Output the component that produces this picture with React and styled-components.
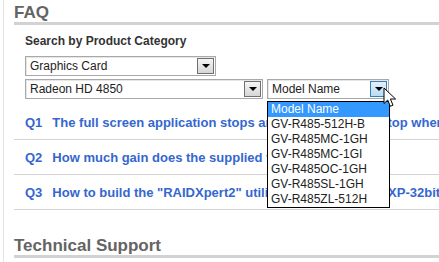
import styled, { createGlobalStyle } from 'styled-components';

const GlobalStyle = createGlobalStyle`
  body {
    margin: 0;
    background: #fff;
    font-family: "Liberation Sans", Arial, sans-serif;
  }
`;

const models = [
  'Model Name',
  'GV-R485-512H-B',
  'GV-R485MC-1GH',
  'GV-R485MC-1GI',
  'GV-R485OC-1GH',
  'GV-R485SL-1GH',
  'GV-R485ZL-512H',
];

const faqs = [
  { n: 'Q1', text: 'The full screen application stops and goes to the desktop when running games' },
  { n: 'Q2', text: 'How much gain does the supplied tool give?' },
  { n: 'Q3', text: 'How to build the "RAIDXpert2" utility for the Windows XP-32bit OS' },
];

function Select({ width, value, focused }) {
  return (
    <SelectBox $w={width}>
      <SelectValue>{value}</SelectValue>
      <ArrowButton $focused={focused}>
        <Triangle />
      </ArrowButton>
    </SelectBox>
  );
}

function App() {
  return (
    <Page>
      <GlobalStyle />
      <Heading>FAQ</Heading>
      <Search>
        <SearchLabel>Search by Product Category</SearchLabel>
        <SelectRow>
          <Select width={191} value="Graphics Card" />
        </SelectRow>
        <SelectRow>
          <Select width={238} value="Radeon HD 4850" />
          <Anchor>
            <Select width={122} value="Model Name" focused />
            <DropList>
              {models.map((m, i) => (
                <DropItem key={m} $active={i === 0}>{m}</DropItem>
              ))}
            </DropList>
            <Cursor width="14" height="21" viewBox="0 0 14 21">
              <path d="M1 1 L1 16.5 L4.7 13 L7.3 19.3 L10 18.2 L7.4 12 L12.6 12 Z" fill="#fff" stroke="#000" strokeWidth="1" strokeLinejoin="round" />
            </Cursor>
          </Anchor>
        </SelectRow>
      </Search>
      <FaqList>
        {faqs.map((f) => (
          <FaqRow key={f.n}>
            <QNum>{f.n}</QNum>
            <QText>{f.text}</QText>
          </FaqRow>
        ))}
      </FaqList>
      <Heading $top>Technical Support</Heading>
    </Page>
  );
}

const Page = styled.div`
  margin-left: 3px;
  border-left: 1px solid #e4e4e4;
  padding-left: 10px;
  height: 262px;
  box-sizing: border-box;
  overflow: hidden;
`;

const Heading = styled.h2`
  margin: ${(p) => (p.$top ? '26px' : '3px')} 0 0;
  padding: 0;
  font-size: 17px;
  line-height: 19px;
  font-weight: bold;
  color: #646464;
  border-bottom: 3px solid #d2d2d2;
`;

const Search = styled.div`
  padding: 9px 0 0 11px;
`;

const SearchLabel = styled.div`
  font-size: 12px;
  font-weight: bold;
  color: #333;
  line-height: 14px;
  margin-bottom: 8px;
`;

const SelectRow = styled.div`
  display: flex;
  gap: 4px;
  margin-bottom: 3px;
`;

const Anchor = styled.div`
  position: relative;
`;

const SelectBox = styled.div`
  width: ${(p) => p.$w}px;
  height: 20px;
  box-sizing: border-box;
  display: flex;
  align-items: center;
  border: 1px solid #a9a9a9;
  box-shadow: inset 1px 1px 0 #e6e6e6;
  background: #fff;
  padding: 0 1px 0 4px;
`;

const SelectValue = styled.span`
  flex: 1;
  font-size: 12px;
  color: #222;
  white-space: nowrap;
`;

const ArrowButton = styled.span`
  width: 17px;
  height: 16px;
  box-sizing: border-box;
  display: flex;
  align-items: center;
  justify-content: center;
  border: 1px solid ${(p) => (p.$focused ? '#3c7fb1' : '#707070')};
  background: ${(p) =>
    p.$focused ? 'linear-gradient(#e3f1fb, #b9dcf3)' : 'linear-gradient(#f4f4f4, #d6d6d6)'};
`;

const Triangle = styled.span`
  width: 0;
  height: 0;
  border-left: 4px solid transparent;
  border-right: 4px solid transparent;
  border-top: 4px solid #000;
`;

const DropList = styled.div`
  position: absolute;
  left: 0;
  top: 22px;
  width: 123px;
  box-sizing: border-box;
  border: 1px solid #000;
  background: #fff;
  z-index: 5;
`;

const DropItem = styled.div`
  height: 15px;
  line-height: 15px;
  font-size: 12px;
  padding-left: 3px;
  color: ${(p) => (p.$active ? '#fff' : '#222')};
  background: ${(p) => (p.$active ? '#3399ff' : '#fff')};
`;

const Cursor = styled.svg`
  position: absolute;
  left: 116px;
  top: 8px;
  z-index: 6;
`;

const FaqList = styled.div`
  margin-top: 6px;
`;

const FaqRow = styled.div`
  display: flex;
  align-items: center;
  gap: 10px;
  height: 34px;
  padding-left: 11px;
  border-bottom: 1px solid #d4d4d4;
  white-space: nowrap;
  font-size: 13px;
  font-weight: bold;
  color: #3467cf;
`;

const QNum = styled.span``;

const QText = styled.span``;

export default App;
